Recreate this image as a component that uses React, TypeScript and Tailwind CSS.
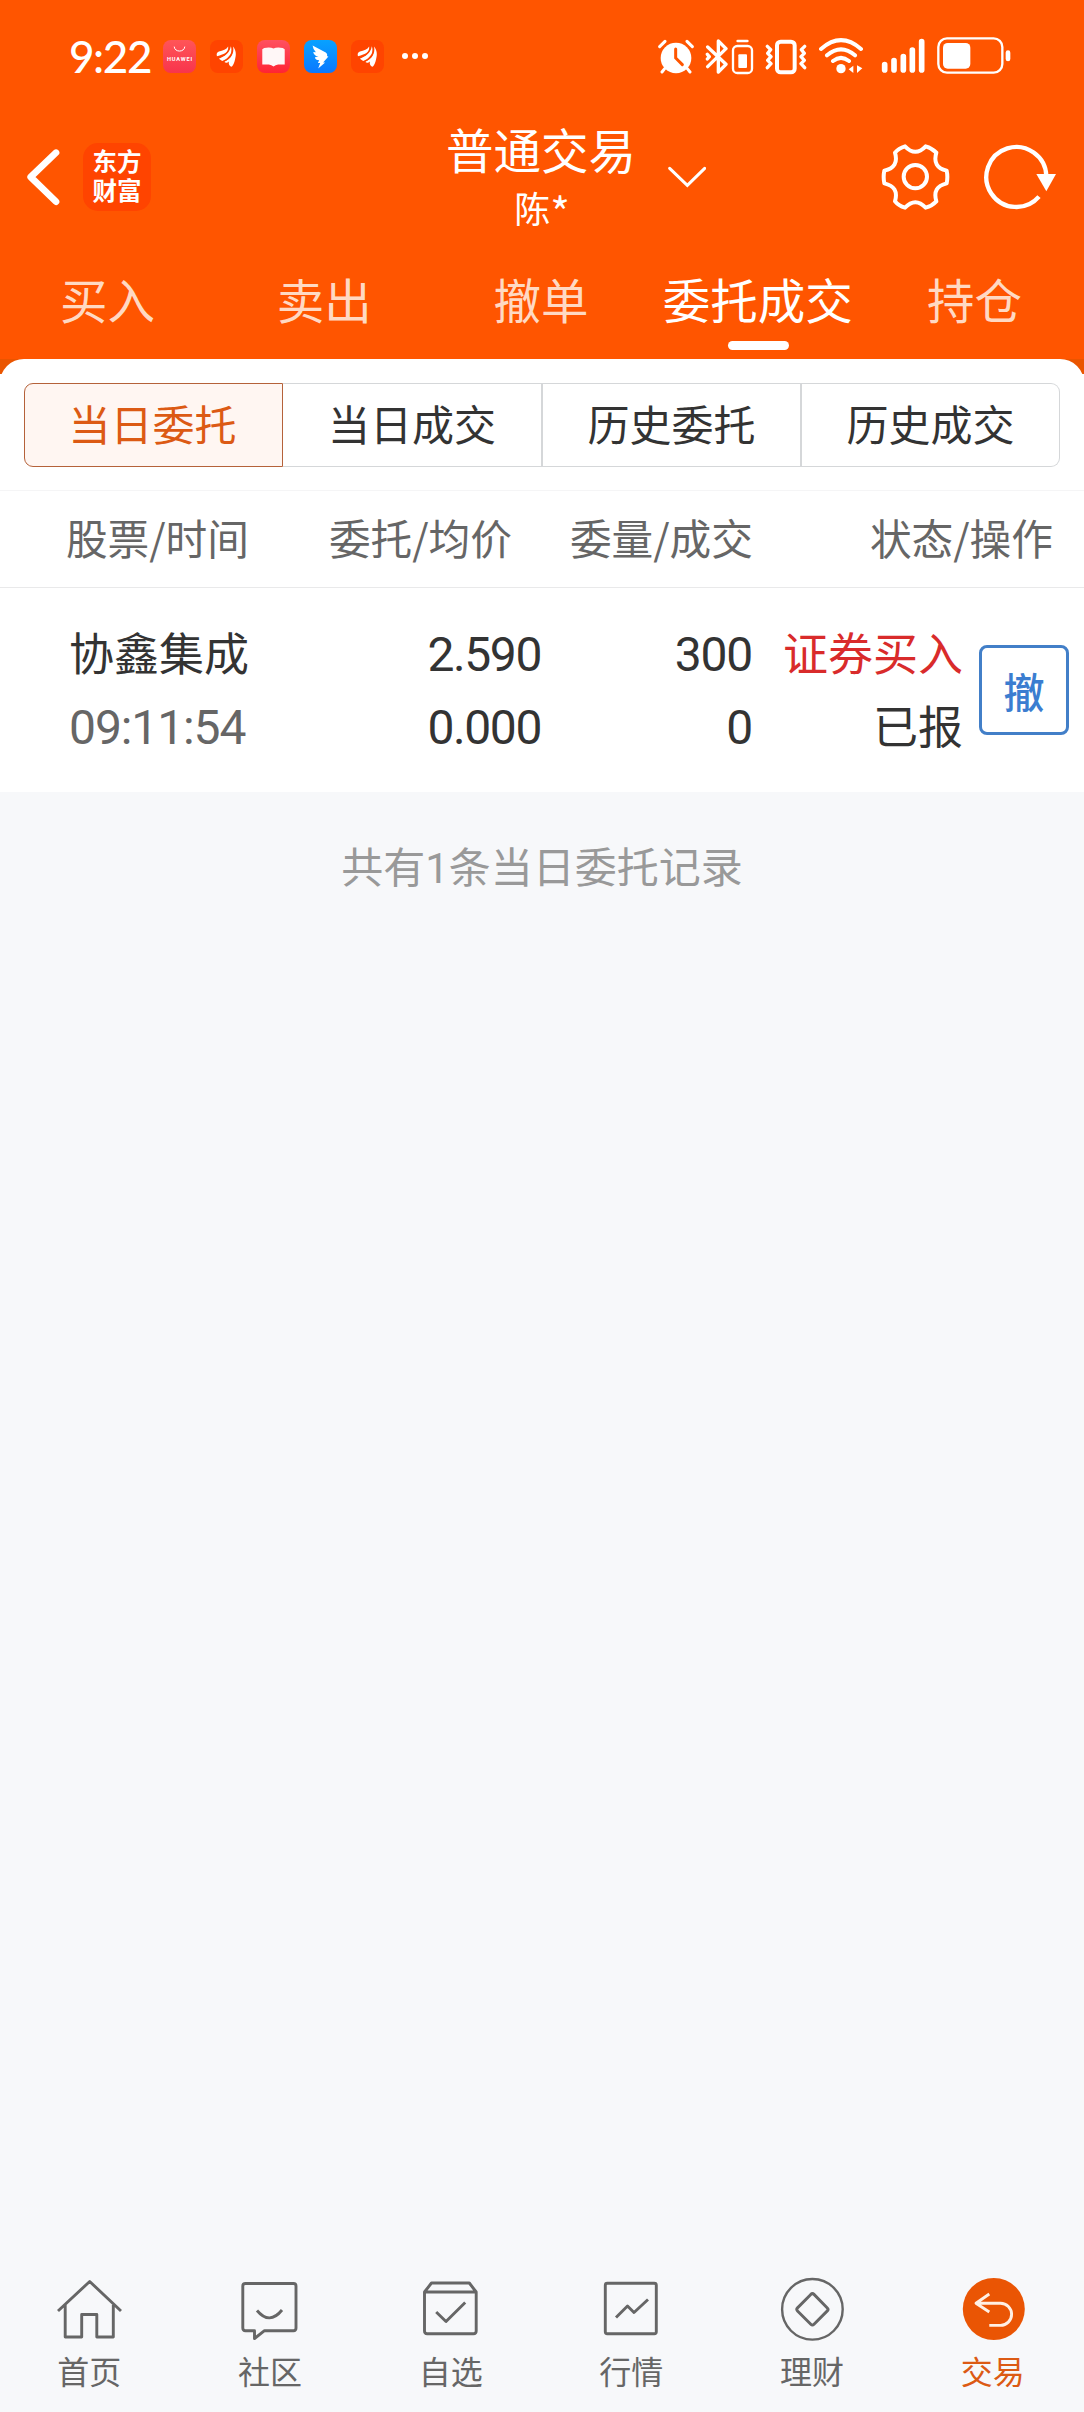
import React from "react";

type ArtProps = {
  box: string;
  className: string;
  children: React.ReactNode;
};

const Art = ({ box, className, children }: ArtProps) => (
  <svg viewBox={box} className={className} fill="none" stroke="none">
    {children}
  </svg>
);

const EastMoneyBadge = () => (
  <Art box="0 0 100 100" className="h-[33px] w-[33px]">
    <rect width="100" height="100" rx="24" fill="#ff4400" />
    <path d="M21 49C19 42 21 37 27 35C39 32 50 29 55 20C57 36 45 44 21 49Z" fill="#fff" />
    <path d="M27 57C43 50 60 40 63 19C71 35 60 54 37 64Z" fill="#fff" />
    <path d="M43 66C63 58 74 42 70 20C79 32 80 44 76 58C74 67 71 75 66 81C59 80 56 73 57 65C53 69 48 71 43 66Z" fill="#fff" />
    <path d="M25 54C43 48 56 40 60 20M40 66C62 56 69 44 67 19" stroke="#ff4400" strokeWidth="3" />
  </Art>
);

const StatusBar = () => (
  <div className="flex h-[112px] items-center pr-[73px] pl-[69px] text-white">
    <span className="w-[94px] font-['Lato'] text-[44px] leading-[48px] font-medium tracking-[-1.4px]">9:22</span>
    <div className="flex items-center gap-[14px]">
      <Art box="0 0 100 100" className="h-[33px] w-[33px]">
        <defs>
          <linearGradient id="store" x1="0" y1="0" x2="0" y2="1">
            <stop stopColor="#ff5558" />
            <stop offset="1" stopColor="#f8344c" />
          </linearGradient>
        </defs>
        <rect width="100" height="100" rx="24" fill="url(#store)" />
        <path d="M34 20C35 38 65 38 66 20" stroke="#fff" strokeWidth="3" />
        <text x="50" y="63" textAnchor="middle" fontFamily="Roboto" fontWeight="700" fontSize="17" textLength="76" fill="#fff">
          HUAWEI
        </text>
      </Art>
      <EastMoneyBadge />
      <Art box="0 0 100 100" className="h-[33px] w-[33px]">
        <defs>
          <linearGradient id="book" x1="0" y1="0" x2="0" y2="1">
            <stop stopColor="#ff5160" />
            <stop offset="1" stopColor="#ff2433" />
          </linearGradient>
        </defs>
        <rect width="100" height="100" rx="24" fill="url(#book)" />
        <path d="M16 28L22 24Q40 20 50 26Q60 20 78 24L84 28V74H64Q56 75 50 80Q44 75 36 74H16Z" fill="#fff7f7" />
      </Art>
      <Art box="0 0 100 100" className="h-[33px] w-[33px]">
        <defs>
          <linearGradient id="wing" x1="0" y1="0" x2="0" y2="1">
            <stop stopColor="#08a2ff" />
            <stop offset="1" stopColor="#0a78ff" />
          </linearGradient>
        </defs>
        <rect width="100" height="100" rx="24" fill="url(#wing)" />
        <path d="M26 17L66 38Q72 42 70 49L74 50L58 68H64L43 86L49 70H42L46 61Q34 61 33 52L44 51Q30 47 28 36L36 37Q27 28 26 17Z" fill="#fff" />
      </Art>
      <EastMoneyBadge />
    </div>
    <div className="ml-[18px] flex gap-1">
      <i className="h-[6px] w-[6px] rounded-full bg-white" />
      <i className="h-[6px] w-[6px] rounded-full bg-white" />
      <i className="h-[6px] w-[6px] rounded-full bg-white" />
    </div>
    <div className="ml-auto flex items-center">
      <Art box="54 50 108 114" className="h-[38px] w-[36px]">
        <circle cx="108" cy="113" r="46" fill="#fff" />
        <path d="M59 79L75 63M157 79L141 63M74 145L66 155M142 145L150 155" stroke="#fff" strokeWidth="9" strokeLinecap="round" />
        <path d="M107 86V113L127 133" stroke="#ff5500" strokeWidth="9" strokeLinecap="round" />
      </Art>
      <Art box="195 50 147 114" className="ml-[11px] h-[38px] w-[49px]">
        <path d="M203 80L258 132L235 155V62L258 85L203 139M202 102L208 109L202 116" stroke="#fff" strokeWidth="10" strokeLinecap="round" strokeLinejoin="round" />
        <path d="M293 62H322" stroke="#fff" strokeWidth="8" strokeLinecap="round" />
        <rect x="279" y="77" width="57" height="81" rx="13" stroke="#fff" strokeWidth="7" />
        <rect x="295" y="102" width="26" height="41" rx="3" fill="#fff" />
      </Art>
      <Art box="375 50 126 114" className="ml-[11px] h-[38px] w-[42px]">
        <rect x="411" y="64" width="53" height="92" rx="11" stroke="#fff" strokeWidth="12" />
        <path d="M382 78L392 88L383 99L393 109L383 120L393 130L382 142M494 78L484 88L493 99L483 109L493 120L483 130L494 142" stroke="#fff" strokeWidth="10" strokeLinecap="round" strokeLinejoin="round" />
      </Art>
      <Art box="537 50 135 114" className="ml-[12px] h-[38px] w-[45px]">
        <path d="M543 86Q603 33 663 86M561 105Q603 69 645 105M579 122Q603 103 627 122" stroke="#fff" strokeWidth="12" strokeLinecap="round" />
        <circle cx="603" cy="145" r="14" fill="#fff" />
        <path d="M626 147L640 136V158ZM667 144L651 135V158Z" fill="#fff" />
      </Art>
      <Art box="724 50 132 114" className="ml-[17px] h-[38px] w-[44px]">
        <path d="M735 133V149M763 121V149M791 109V149M818 89V149M846 64V149" stroke="#fff" strokeWidth="17" strokeLinecap="round" />
      </Art>
      <Art box="890 50 222 114" className="ml-[12px] h-[38px] w-[74px]">
        <rect x="894" y="54" width="192" height="103" rx="26" stroke="#fff" strokeWidth="7" />
        <rect x="908" y="68" width="82" height="77" rx="14" fill="#fff" />
        <rect x="1096" y="90" width="14" height="33" rx="7" fill="#fff" />
      </Art>
    </div>
  </div>
);

const TitleBar = () => (
  <div className="grid h-[130px] grid-cols-[1fr_auto_1fr] items-center text-white">
    <div className="flex items-center pl-[26px]">
      <Art box="78 115 102 174" className="h-[58px] w-[34px]">
        <path d="M168 129L92 202L168 276" stroke="#fff" strokeWidth="20" strokeLinecap="round" strokeLinejoin="round" />
      </Art>
      <div className="ml-[23px] h-[68px] w-[68px] rounded-[15px] bg-[#ff4400] pt-[3px] text-center text-[24.5px] leading-[29px] font-bold">
        东方
        <br />
        财富
      </div>
    </div>
    <div className="-mt-[3px] text-center">
      <div className="-ml-[2px] text-[47.5px] leading-[62px]">普通交易</div>
      <div className="h-[54px] text-[36px] leading-[54px]">
        陈<span className="align-[-6px] text-[42px] leading-none">*</span>
      </div>
    </div>
    <div className="flex items-center pl-[32px]">
      <Art box="0 0 114 66" className="h-[22px] w-[38px]">
        <path d="M5 7L58 58L110 7" stroke="#fff" strokeWidth="9" strokeLinecap="round" />
      </Art>
      <Art box="420 99 210 204" className="ml-[175px] h-[68px] w-[70px]">
        <path
          d="M492 109Q523 142 554 109Q573 114 586 128Q573 172 617 182Q621 201 617 220Q573 230 586 274Q573 288 554 293Q523 260 492 293Q473 288 462 274Q475 230 430 220Q426 201 430 182Q475 172 462 128Q473 114 492 109Z"
          stroke="#fff"
          strokeWidth="12"
          strokeLinejoin="round"
        />
        <circle cx="523" cy="200" r="35" stroke="#fff" strokeWidth="12" />
      </Art>
      <Art box="727 99 219 204" className="ml-[33px] h-[68px] w-[73px]">
        <path d="M892 260A90 90 0 1 1 914 198" stroke="#fff" strokeWidth="13" />
        <path d="M884 192H943L914 244Z" fill="#fff" />
      </Art>
    </div>
  </div>
);

const tabs = ["买入", "卖出", "撤单", "委托成交", "持仓"];

const Tabs = () => (
  <div className="grid h-[117px] grid-cols-5 text-center text-[47.5px] leading-[60px]">
    {tabs.map((t) =>
      t === "委托成交" ? (
        <div key={t} className="flex flex-col items-center pt-[27px] text-white">
          <span className="-ml-[2px]">{t}</span>
          <span className="mt-[12px] h-[9px] w-[61px] rounded-full bg-white" />
        </div>
      ) : (
        <div key={t} className="pt-[27px] pr-[2px] text-[#ffd9c3]">
          {t}
        </div>
      )
    )}
  </div>
);

const Segments = () => (
  <div className="mx-6 grid h-[84px] grid-cols-[259px_260px_259px_258px] text-center text-[42px] leading-[78px] text-[#333]">
    <div className="rounded-l-[9px] border border-[#b5623a] bg-[#fff6f2] pr-[2px] text-[#dc5a14]">当日委托</div>
    <div className="border-y border-r-2 border-[#d5d7d9]">当日成交</div>
    <div className="border-y border-r-2 border-[#d5d7d9]">历史委托</div>
    <div className="rounded-r-[9px] border-y border-r border-[#d5d7d9]">历史成交</div>
  </div>
);

const OrderTable = () => (
  <>
    <div className="mt-[23px] grid h-[98px] grid-cols-[249px_263px_241px_300px] border-y border-t-[#f5f5f6] border-b-[#e9e9ea] text-right text-[41.7px] leading-[92px] text-[#666]">
      <div>股票/时间</div>
      <div>委托/均价</div>
      <div>委量/成交</div>
      <div>状态/操作</div>
    </div>
    <div className="grid h-[204px] grid-cols-[247px_294px_211px_211px_1fr] pt-[27px] text-right text-[45px] leading-[73px] text-[#333]">
      <div className="pl-[69px] text-left whitespace-nowrap">
        <div className="h-[76px]">协鑫集成</div>
        <div className="font-['Roboto'] text-[48px] tracking-[-1.1px] text-[#666]">09:11:54</div>
      </div>
      <div className="pt-[3px] font-['Roboto'] text-[48px] tracking-[-1.4px]">
        <div>2.590</div>
        <div>0.000</div>
      </div>
      <div className="pt-[3px] font-['Roboto'] text-[48px] tracking-[-1.2px]">
        <div>300</div>
        <div>0</div>
      </div>
      <div>
        <div className="text-[#d92b2b]">证券买入</div>
        <div>已报</div>
      </div>
      <div className="pt-[30px] pl-[16px]">
        <button className="block h-[90px] w-[90px] rounded-[8px] border-[3px] border-[#427fc8] text-center text-[41px] leading-[76px] font-medium text-[#3b7dd0]">
          撤
        </button>
      </div>
    </div>
  </>
);

const navItems = [
  {
    label: "首页",
    art: <path d="M4 38L35.7 8.5L67 38M11.2 32V64H27.7V41.5H42.8V64H59.3V32" />,
  },
  {
    label: "社区",
    art: (
      <>
        <path d="M10.5 10.5H58.5Q61 10.5 61 13V55Q61 57.7 58.5 57.7H29.5L19.5 65.5V57.7H10.5Q7.8 57.7 7.8 55V13Q7.8 10.5 10.5 10.5Z" />
        <path d="M22 37.5Q34.5 52.5 47 37" />
      </>
    ),
  },
  {
    label: "自选",
    art: (
      <>
        <path d="M8.5 19L15.5 10H53.3L60.2 19V58Q60.2 60.7 57.5 60.7H11.2Q8.5 60.7 8.5 58ZM8.5 19H60.2" />
        <path d="M20.2 39L30 48.5L49.2 29.5" />
      </>
    ),
  },
  {
    label: "行情",
    art: (
      <>
        <rect x="9.3" y="10.3" width="51" height="50.4" rx="2" />
        <path d="M20 44.5L31.5 33L38 39.5L52 26.5" />
      </>
    ),
  },
  {
    label: "理财",
    art: (
      <>
        <circle cx="35.4" cy="36.3" r="30.3" strokeWidth="2.4" />
        <path d="M33.8 21.4Q35.4 19.8 37 21.4L50.3 34.9Q51.8 36.4 50.3 37.9L37 51.3Q35.4 52.9 33.8 51.3L20.5 37.9Q19 36.4 20.5 34.9Z" />
      </>
    ),
  },
  {
    label: "交易",
    art: (
      <>
        <circle cx="35.8" cy="36" r="31" fill="#ea5504" stroke="none" />
        <path d="M31.3 21L18 30.2L31.3 39M18 30.2H42.5A11.1 11.1 0 0 1 42.5 52.4H31.3" stroke="#fff0e4" />
      </>
    ),
  },
];

const BottomNav = () => (
  <nav className="grid h-[172px] grid-cols-6 pt-[33px]">
    {navItems.map(({ label, art }) => (
      <div key={label} className={label === "交易" ? "flex flex-col items-center text-[#dc5a14]" : "flex flex-col items-center text-[#666]"}>
        <svg viewBox="0 0 72 72" className="h-[72px] w-[72px]" fill="none" stroke="#666" strokeWidth="2.9" strokeLinejoin="round">
          {art}
        </svg>
        <span className="mt-[5px] pr-[2px] text-[32px] leading-[40px]">{label}</span>
      </div>
    ))}
  </nav>
);

export default function App() {
  return (
    <div className="flex h-[2412px] w-[1084px] flex-col overflow-hidden bg-[#f7f8fa] font-['Noto_Sans_CJK_SC',sans-serif]">
      <header className="bg-[#ff5500]">
        <StatusBar />
        <TitleBar />
        <Tabs />
      </header>
      <main className="flex-1">
        <div className="bg-[linear-gradient(#ea5500_15px,#fff_15px)]">
          <section className="rounded-t-[24px] bg-white pt-6">
            <Segments />
            <OrderTable />
          </section>
        </div>
        <p className="pt-[43px] text-center text-[42px] leading-[60px] text-[#999]">
          共有<span className="font-['Roboto']">1</span>条当日委托记录
        </p>
      </main>
      <BottomNav />
    </div>
  );
}
